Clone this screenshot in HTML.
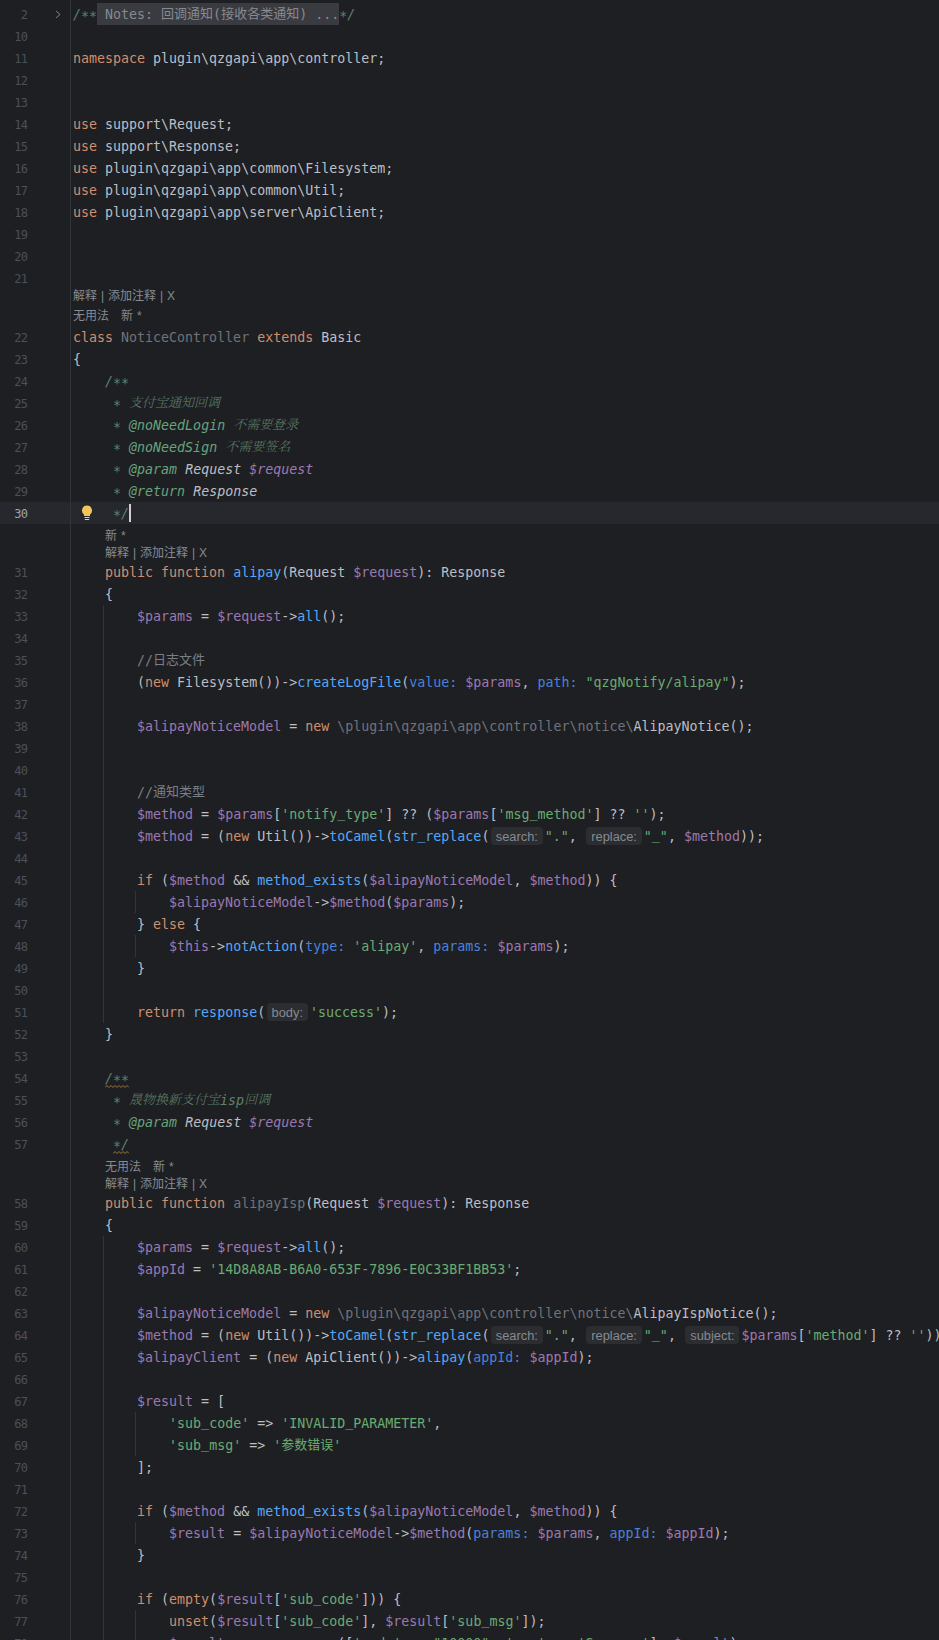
<!DOCTYPE html>
<html lang="zh"><head><meta charset="utf-8"><title>NoticeController.php</title>
<style>
html,body{margin:0;padding:0;background:#1e1f22;}
body{width:939px;height:1640px;overflow:hidden;position:relative;font-family:"DejaVu Sans Mono","Liberation Mono","Noto Sans CJK SC",monospace;font-size:13.3px;color:#bcbec4;}
#ed{position:absolute;left:0;top:3px;width:939px;}
.r{height:22px;line-height:22px;white-space:pre;position:relative;}
.r.cur{background:#26282e;}
.n{position:absolute;left:0;top:1px;width:27.4px;text-align:right;font-size:12px;color:#4b5059;letter-spacing:-0.6px;}
.cur .n{color:#a1a3ab;}
.code{position:absolute;left:73px;top:1px;}
.code b{font-weight:normal;font-size:13px;font-family:"Liberation Mono","Noto Sans CJK SC",sans-serif;position:relative;top:-1px;}
.hr{height:15px;line-height:15px;}
.hint{position:absolute;left:73px;top:0;font-family:"Liberation Sans","Noto Sans CJK SC",sans-serif;font-size:12px;color:#868a91;word-spacing:0.6px;}
.hr .hint{top:0px;}
.vr .hint{top:1px;}
.k{color:#cf8e6d}.s{color:#6aab73}.v{color:#9c79b0}.f{color:#56a8f5}.p{color:#4a82d9}
.c{color:#7a7e85}.d{color:#5f826b;font-style:italic}.t{color:#67a37c;font-style:italic}
.i{font-style:italic}.vi{color:#9c79b0;font-style:italic}.u{color:#6f737a}
.d b{font-family:"Liberation Serif","Noto Serif CJK SC","Noto Sans CJK SC",serif;font-weight:300;position:relative;top:-1px;}
.fold{background:#393b40;color:#868a91;display:inline-block;height:22px;margin-top:-1px;line-height:24px;vertical-align:top;}
.h{display:inline-block;vertical-align:top;margin:1px 2px 0 1.5px;height:18px;line-height:19px;padding:0 4.9px;border-radius:4px;background:#2b2d30;color:#868a91;font-family:"Liberation Sans",sans-serif;font-size:12.85px;}
.w{position:relative;display:inline-block;}
.w svg{position:absolute;left:0;top:17px;}
.caret{position:absolute;display:inline-block;width:2px;height:18px;background:#ced0d6;margin-top:1px;margin-left:-0.5px;}
.code u{text-decoration:none;position:relative;top:-2.5px;}
.code s{text-decoration:none;position:relative;top:1.5px;}
.g{position:absolute;width:1px;background:#313438;}
#gl{position:absolute;left:70px;top:0;width:1px;height:1640px;background:#313438;z-index:2;}
</style></head>
<body>
<i id="gl"></i>
<i class="g" style="left:103px;top:605px;height:418px"></i>
<i class="g" style="left:135px;top:891px;height:22px"></i>
<i class="g" style="left:135px;top:935px;height:22px"></i>
<i class="g" style="left:103px;top:1236px;height:418px"></i>
<i class="g" style="left:135px;top:1412px;height:44px"></i>
<i class="g" style="left:135px;top:1522px;height:22px"></i>
<i class="g" style="left:135px;top:1610px;height:44px"></i>
<div id="ed">
<div class="r"><span class="n">2</span><span class="code"><span class="d">/<s>*</s><s>*</s></span><span class="fold"> Notes: <b>回调通知</b>(<b>接收各类通知</b>) ...</span><span class="d"><s>*</s>/</span></span></div>
<div class="r"><span class="n">10</span><span class="code"></span></div>
<div class="r"><span class="n">11</span><span class="code"><span class="k">namespace</span> plugin\qzgapi\app\controller;</span></div>
<div class="r"><span class="n">12</span><span class="code"></span></div>
<div class="r"><span class="n">13</span><span class="code"></span></div>
<div class="r"><span class="n">14</span><span class="code"><span class="k">use</span> support\Request;</span></div>
<div class="r"><span class="n">15</span><span class="code"><span class="k">use</span> support\Response;</span></div>
<div class="r"><span class="n">16</span><span class="code"><span class="k">use</span> plugin\qzgapi\app\common\Filesystem;</span></div>
<div class="r"><span class="n">17</span><span class="code"><span class="k">use</span> plugin\qzgapi\app\common\Util;</span></div>
<div class="r"><span class="n">18</span><span class="code"><span class="k">use</span> plugin\qzgapi\app\server\ApiClient;</span></div>
<div class="r"><span class="n">19</span><span class="code"></span></div>
<div class="r"><span class="n">20</span><span class="code"></span></div>
<div class="r"><span class="n">21</span><span class="code"></span></div>
<div class="r hr"><span class="n"></span><span class="hint" style="margin-left:0px">解释 | 添加注释 | X</span></div>
<div class="r vr"><span class="n"></span><span class="hint" style="margin-left:0px">无用法 新 *</span></div>
<div class="r"><span class="n">22</span><span class="code"><span class="k">class</span> <span class="u">NoticeController</span> <span class="k">extends</span> Basic</span></div>
<div class="r"><span class="n">23</span><span class="code">{</span></div>
<div class="r"><span class="n">24</span><span class="code">    <span class="d">/<s>*</s><s>*</s></span></span></div>
<div class="r"><span class="n">25</span><span class="code">    <span class="d"> <s>*</s> <b>支付宝通知回调</b></span></span></div>
<div class="r"><span class="n">26</span><span class="code">    <span class="d"> <s>*</s> </span><span class="t">@noNeedLogin</span><span class="d"> <b>不需要登录</b></span></span></div>
<div class="r"><span class="n">27</span><span class="code">    <span class="d"> <s>*</s> </span><span class="t">@noNeedSign</span><span class="d"> <b>不需要签名</b></span></span></div>
<div class="r"><span class="n">28</span><span class="code">    <span class="d"> <s>*</s> </span><span class="t">@param</span><span class="i"> Request </span><span class="vi">$request</span></span></div>
<div class="r"><span class="n">29</span><span class="code">    <span class="d"> <s>*</s> </span><span class="t">@return</span><span class="i"> Response</span></span></div>
<div class="r cur"><span class="n">30</span><span class="code">    <span class="d"> <s>*</s>/</span><i class="caret"></i></span></div>
<div class="r vr"><span class="n"></span><span class="hint" style="margin-left:32px">新 *</span></div>
<div class="r hr"><span class="n"></span><span class="hint" style="margin-left:32px">解释 | 添加注释 | X</span></div>
<div class="r"><span class="n">31</span><span class="code">    <span class="k">public function</span> <span class="f">alipay</span>(Request <span class="v">$request</span>): Response</span></div>
<div class="r"><span class="n">32</span><span class="code">    {</span></div>
<div class="r"><span class="n">33</span><span class="code">        <span class="v">$params</span> = <span class="v">$request</span>-&gt;<span class="f">all</span>();</span></div>
<div class="r"><span class="n">34</span><span class="code"></span></div>
<div class="r"><span class="n">35</span><span class="code">        <span class="c">//<b>日志文件</b></span></span></div>
<div class="r"><span class="n">36</span><span class="code">        (<span class="k">new</span> Filesystem())-&gt;<span class="f">createLogFile</span>(<span class="p">value:</span> <span class="v">$params</span>, <span class="p">path:</span> <span class="s">"qzgNotify/alipay"</span>);</span></div>
<div class="r"><span class="n">37</span><span class="code"></span></div>
<div class="r"><span class="n">38</span><span class="code">        <span class="v">$alipayNoticeModel</span> = <span class="k">new</span> <span class="u">\plugin\qzgapi\app\controller\notice\</span>AlipayNotice();</span></div>
<div class="r"><span class="n">39</span><span class="code"></span></div>
<div class="r"><span class="n">40</span><span class="code"></span></div>
<div class="r"><span class="n">41</span><span class="code">        <span class="c">//<b>通知类型</b></span></span></div>
<div class="r"><span class="n">42</span><span class="code">        <span class="v">$method</span> = <span class="v">$params</span>[<span class="s">'notify<u>_</u>type'</span>] ?? (<span class="v">$params</span>[<span class="s">'msg<u>_</u>method'</span>] ?? <span class="s">''</span>);</span></div>
<div class="r"><span class="n">43</span><span class="code">        <span class="v">$method</span> = (<span class="k">new</span> Util())-&gt;<span class="f">toCamel</span>(<span class="f">str<u>_</u>replace</span>(<span class="h">search:</span><span class="s">"."</span>, <span class="h">replace:</span><span class="s">"<u>_</u>"</span>, <span class="v">$method</span>));</span></div>
<div class="r"><span class="n">44</span><span class="code"></span></div>
<div class="r"><span class="n">45</span><span class="code">        <span class="k">if</span> (<span class="v">$method</span> &amp;&amp; <span class="f">method<u>_</u>exists</span>(<span class="v">$alipayNoticeModel</span>, <span class="v">$method</span>)) {</span></div>
<div class="r"><span class="n">46</span><span class="code">            <span class="v">$alipayNoticeModel</span>-&gt;<span class="v">$method</span>(<span class="v">$params</span>);</span></div>
<div class="r"><span class="n">47</span><span class="code">        } <span class="k">else</span> {</span></div>
<div class="r"><span class="n">48</span><span class="code">            <span class="v">$this</span>-&gt;<span class="f">notAction</span>(<span class="p">type:</span> <span class="s">'alipay'</span>, <span class="p">params:</span> <span class="v">$params</span>);</span></div>
<div class="r"><span class="n">49</span><span class="code">        }</span></div>
<div class="r"><span class="n">50</span><span class="code"></span></div>
<div class="r"><span class="n">51</span><span class="code">        <span class="k">return</span> <span class="f">response</span>(<span class="h">body:</span><span class="s">'success'</span>);</span></div>
<div class="r"><span class="n">52</span><span class="code">    }</span></div>
<div class="r"><span class="n">53</span><span class="code"></span></div>
<div class="r"><span class="n">54</span><span class="code">    <span class="d"><span class="w">/<s>*</s><s>*</s><svg width="24" height="4" viewBox="0 0 24 4"><polyline points="0,2.5 2,0.5 4,2.5 6,0.5 8,2.5 10,0.5 12,2.5 14,0.5 16,2.5 18,0.5 20,2.5 22,0.5 24,2.5" fill="none" stroke="#9a7a3a" stroke-width="1"/></svg></span></span></span></div>
<div class="r"><span class="n">55</span><span class="code">    <span class="d"> <s>*</s> <b>晟物换新支付宝</b>isp<b>回调</b></span></span></div>
<div class="r"><span class="n">56</span><span class="code">    <span class="d"> <s>*</s> </span><span class="t">@param</span><span class="i"> Request </span><span class="vi">$request</span></span></div>
<div class="r"><span class="n">57</span><span class="code">    <span class="d"> <span class="w"><s>*</s>/<svg width="16" height="4" viewBox="0 0 16 4"><polyline points="0,2.5 2,0.5 4,2.5 6,0.5 8,2.5 10,0.5 12,2.5 14,0.5 16,2.5" fill="none" stroke="#9a7a3a" stroke-width="1"/></svg></span></span></span></div>
<div class="r vr"><span class="n"></span><span class="hint" style="margin-left:32px">无用法 新 *</span></div>
<div class="r hr"><span class="n"></span><span class="hint" style="margin-left:32px">解释 | 添加注释 | X</span></div>
<div class="r"><span class="n">58</span><span class="code">    <span class="k">public function</span> <span class="u">alipayIsp</span>(Request <span class="v">$request</span>): Response</span></div>
<div class="r"><span class="n">59</span><span class="code">    {</span></div>
<div class="r"><span class="n">60</span><span class="code">        <span class="v">$params</span> = <span class="v">$request</span>-&gt;<span class="f">all</span>();</span></div>
<div class="r"><span class="n">61</span><span class="code">        <span class="v">$appId</span> = <span class="s">'14D8A8AB-B6A0-653F-7896-E0C33BF1BB53'</span>;</span></div>
<div class="r"><span class="n">62</span><span class="code"></span></div>
<div class="r"><span class="n">63</span><span class="code">        <span class="v">$alipayNoticeModel</span> = <span class="k">new</span> <span class="u">\plugin\qzgapi\app\controller\notice\</span>AlipayIspNotice();</span></div>
<div class="r"><span class="n">64</span><span class="code">        <span class="v">$method</span> = (<span class="k">new</span> Util())-&gt;<span class="f">toCamel</span>(<span class="f">str<u>_</u>replace</span>(<span class="h">search:</span><span class="s">"."</span>, <span class="h">replace:</span><span class="s">"<u>_</u>"</span>, <span class="h">subject:</span><span class="v">$params</span>[<span class="s">'method'</span>] ?? <span class="s">''</span>));</span></div>
<div class="r"><span class="n">65</span><span class="code">        <span class="v">$alipayClient</span> = (<span class="k">new</span> ApiClient())-&gt;<span class="f">alipay</span>(<span class="p">appId:</span> <span class="v">$appId</span>);</span></div>
<div class="r"><span class="n">66</span><span class="code"></span></div>
<div class="r"><span class="n">67</span><span class="code">        <span class="v">$result</span> = [</span></div>
<div class="r"><span class="n">68</span><span class="code">            <span class="s">'sub<u>_</u>code'</span> =&gt; <span class="s">'INVALID<u>_</u>PARAMETER'</span>,</span></div>
<div class="r"><span class="n">69</span><span class="code">            <span class="s">'sub<u>_</u>msg'</span> =&gt; <span class="s">'<b>参数错误</b>'</span></span></div>
<div class="r"><span class="n">70</span><span class="code">        ];</span></div>
<div class="r"><span class="n">71</span><span class="code"></span></div>
<div class="r"><span class="n">72</span><span class="code">        <span class="k">if</span> (<span class="v">$method</span> &amp;&amp; <span class="f">method<u>_</u>exists</span>(<span class="v">$alipayNoticeModel</span>, <span class="v">$method</span>)) {</span></div>
<div class="r"><span class="n">73</span><span class="code">            <span class="v">$result</span> = <span class="v">$alipayNoticeModel</span>-&gt;<span class="v">$method</span>(<span class="p">params:</span> <span class="v">$params</span>, <span class="p">appId:</span> <span class="v">$appId</span>);</span></div>
<div class="r"><span class="n">74</span><span class="code">        }</span></div>
<div class="r"><span class="n">75</span><span class="code"></span></div>
<div class="r"><span class="n">76</span><span class="code">        <span class="k">if</span> (<span class="k">empty</span>(<span class="v">$result</span>[<span class="s">'sub<u>_</u>code'</span>])) {</span></div>
<div class="r"><span class="n">77</span><span class="code">            <span class="k">unset</span>(<span class="v">$result</span>[<span class="s">'sub<u>_</u>code'</span>], <span class="v">$result</span>[<span class="s">'sub<u>_</u>msg'</span>]);</span></div>
<div class="r"><span class="n">78</span><span class="code">            <span class="v">$result</span> = <span class="f">array<u>_</u>merge</span>([<span class="s">'code'</span> =&gt; <span class="s">"10000"</span>, <span class="s">'msg'</span> =&gt; <span class="s">'Success'</span>], <span class="v">$result</span>);</span></div>
</div>
<svg style="position:absolute;left:52px;top:9px" width="12" height="12" viewBox="0 0 12 12"><path d="M4.1 2 L8 5.45 L4.1 8.9" fill="none" stroke="#80848b" stroke-width="1"/></svg>
<svg style="position:absolute;left:79px;top:504px" width="16" height="18" viewBox="0 0 16 18"><path d="M8 1.5a5 5 0 0 0-3 9v1.5h6v-1.5a5 5 0 0 0-3-9z" fill="#f2c55c"/><rect x="5.5" y="13" width="5" height="1" fill="#ced0d6"/><rect x="5.8" y="15" width="4.4" height="1" fill="#ced0d6"/></svg>
</body></html>
